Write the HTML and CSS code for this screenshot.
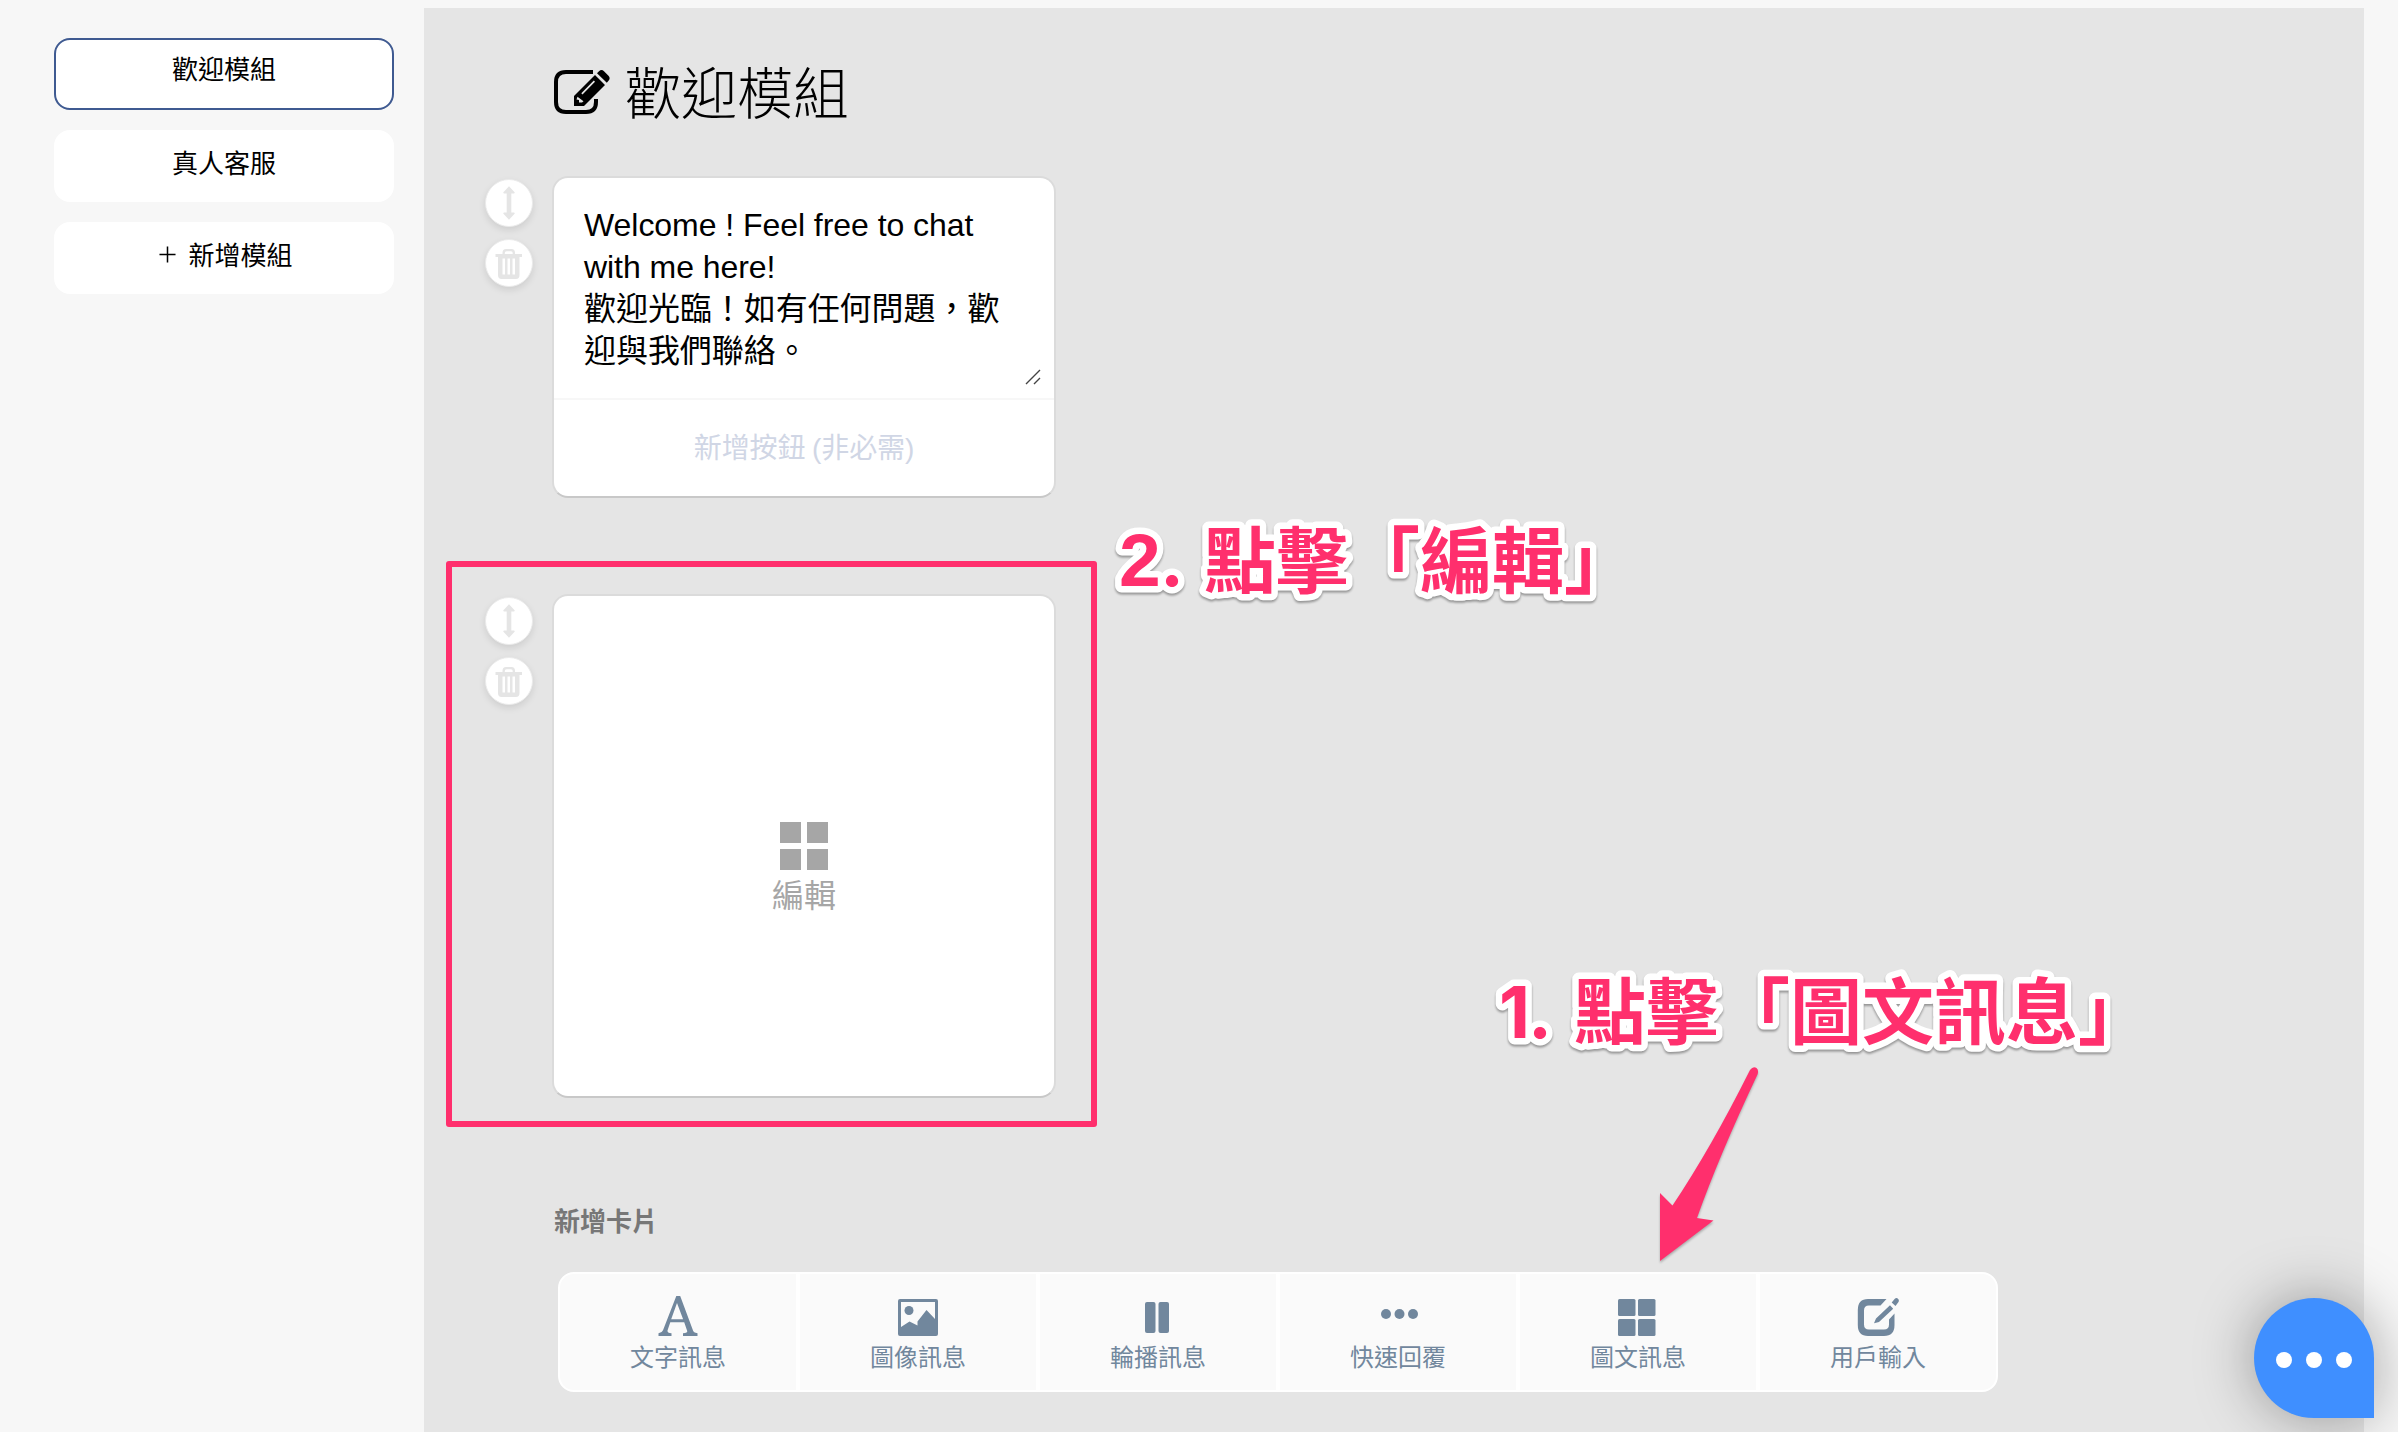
FILE: index.html
```html
<!DOCTYPE html>
<html lang="zh-Hant">
<head>
<meta charset="utf-8">
<title>歡迎模組</title>
<link rel="stylesheet" href="styles.css">
</head>
<body>
<svg class="defs" aria-hidden="true">
  <symbol id="arrows" viewBox="0 0 14 34"><path d="M7 0.3 12.6 6.2Q13 7.4 11.8 7.4H9.3V26.6H11.8Q13 26.6 12.6 27.8L7 33.7 1.4 27.8Q1 26.6 2.2 26.6H4.7V7.4H2.2Q1 7.4 1.4 6.2Z"/></symbol>
  <symbol id="trash" viewBox="0 0 28 30"><path fill-rule="evenodd" d="M7.5 5V3.8Q7.5 0 11 0H16.5Q20 0 20 3.8V5H27V8H24.5V26Q24.5 30 21 30H6.500Q3 30 3 26V8H.5V5ZM9.800 5H17.700V4Q17.700 2.300 16 2.300H11.500Q9.800 2.300 9.800 4ZM7.500 9.500V25.500H10V9.500ZM12.500 9.500V25.500H15V9.500ZM17.500 9.500V25.500H20V9.500Z"/></symbol>
</svg>
<aside class="sidebar">
  <button class="module module-active">歡迎模組</button>
  <button class="module">真人客服</button>
  <button class="module module-new"><svg class="plus" viewBox="0 0 18 18"><path d="M9 0.500V17.500M0.500 9H17.500"/></svg>新增模組</button>
</aside>
<main class="editor">
  <h1 class="title">
    <svg class="title-icon" viewBox="0 0 56 44"><path d="M39 2H12Q2 2 2 12V32Q2 42 12 42H32Q42 42 42 32V29" fill="none" stroke="#000" stroke-width="4"/><path fill-rule="evenodd" d="M20 36V26L41 5 51 15 30 36ZM23.500 26.800 22.500 29.500 25 30V32.500H28L29.500 31.300ZM27.300 23.200 28.500 24.400 41 11.800 39.800 10.600ZM43 3.200 45 1.200Q47.500-1 50 1.200L54.500 5.700Q56.800 8.200 54.500 10.700L52.800 12.800Z"/></svg>
    <span>歡迎模組</span>
  </h1>
  <section class="row">
    <div class="tools">
      <button class="tool"><svg class="i-arrows"><use href="#arrows"/></svg></button>
      <button class="tool"><svg class="i-trash"><use href="#trash"/></svg></button>
    </div>
    <div class="card">
      <div class="message">Welcome ! Feel free to chat<br>with me here!<br>歡迎光臨！如有任何問題，歡<br>迎與我們聯絡。
        <svg class="grip" viewBox="0 0 16 16"><path d="M1 15 15 1M9 15 15 9"/></svg>
      </div>
      <button class="add">新增按鈕 (非必需)</button>
    </div>
  </section>
  <section class="row row-image">
    <div class="tools">
      <button class="tool"><svg class="i-arrows"><use href="#arrows"/></svg></button>
      <button class="tool"><svg class="i-trash"><use href="#trash"/></svg></button>
    </div>
    <div class="card card-square">
      <div class="tiles"><i></i><i></i><i></i><i></i></div>
      <span>編輯</span>
    </div>
  </section>
  <h2 class="subtitle">新增卡片</h2>
  <nav class="toolbar">
    <button class="type"><svg viewBox="0 0 40 40"><path fill-rule="evenodd" d="M18.300 0H22.200L35.300 35.200Q36 36.800 39.500 37.300V40H25V37.300Q29.800 37 29.200 35L26.200 26.200H12.300L9.500 34.500Q9 37 13.500 37.300V40H.5V37.300Q4 36.800 5 34.200ZM19 7 13.200 23.300H25.100Z"/></svg>文字訊息</button>
    <button class="type"><svg viewBox="0 0 40 40"><path fill-rule="evenodd" d="M2 3H38Q40 3 40 5V38Q40 40 38 40H2Q0 40 0 38V5Q0 3 2 3ZM3 6V31L11.500 25.500 19.500 29.500V25.500L28.500 14 37 23V6Z"/><circle cx="11" cy="14.500" r="4.500"/></svg>圖像訊息</button>
    <button class="type"><svg viewBox="0 0 40 40"><rect x="7" y="6" width="10.500" height="31" rx="2"/><rect x="20.500" y="6" width="10.500" height="31" rx="2"/></svg>輪播訊息</button>
    <button class="type"><svg viewBox="0 0 40 40"><circle cx="8" cy="18" r="5"/><circle cx="21.500" cy="18" r="5"/><circle cx="35" cy="18" r="5"/></svg>快速回覆</button>
    <button class="type"><svg viewBox="0 0 40 40"><rect x="0" y="3" width="17.500" height="17" rx="1.500"/><rect x="20" y="3" width="17.500" height="17" rx="1.500"/><rect x="0" y="23" width="17.500" height="17" rx="1.500"/><rect x="20" y="23" width="17.500" height="17" rx="1.500"/></svg>圖文訊息</button>
    <button class="type"><svg viewBox="0 0 42 40"><path d="M11 3H29.500L23.500 9.500H12Q7 9.500 7 14.500V28.500Q7 33.500 12 33.500H27Q32 33.500 32 28.500V23.500L37.500 17.500V29Q37.500 40 27 40H11Q.8 40 .8 29V14Q.8 3 11 3ZM33 9.300 36.200 12.800 22 26 17 27.200 19 22.500ZM34.700 6.600 37.600 3Q39.500 1 41.200 3 42.500 4.500 41.300 6.300L38.500 10Z"/></svg>用戶輸入</button>
  </nav>
</main>
<div class="highlight"></div>
<svg class="callout callout-edit" viewBox="0 0 600 140"><text y="86"><tspan class="two" x="29">2</tspan><tspan class="num" x="70">.</tspan><tspan x="114" y="87">點擊「編輯」</tspan></text></svg>
<svg class="callout callout-card" viewBox="0 0 720 140"><text y="86"><tspan class="num" dx="39 -2">1.</tspan><tspan x="114">點擊「圖文訊息」</tspan></text></svg>
<svg class="arrow" viewBox="0 0 105 200"><path d="M5 196V128L17.500 140.500Q56 83 95 5Q98 1 101.500 3 104 5 102.500 9.500Q64 91 42 153L58.500 155.500Z"/></svg>
<button class="chat"><i></i><i></i><i></i></button>
</body>
</html>
```
FILE: styles.css
```css
* { box-sizing: border-box; }
body {
  margin: 0;
  height: 1432px;
  display: flex;
  position: relative;
  overflow: hidden;
  background: #f7f7f7;
  color: #000;
  font-family: "Liberation Sans", "Noto Sans CJK TC", sans-serif;
}
button { margin: 0; padding: 0; border: 0; background: none; font: inherit; color: inherit; }
.defs { position: absolute; width: 0; height: 0; }

.sidebar { width: 424px; padding: 38px 30px 0 54px; display: flex; flex-direction: column; gap: 20px; }
.module {
  height: 72px;
  padding-bottom: 10px;
  display: flex;
  align-items: center;
  justify-content: center;
  border: 2px solid #fff;
  border-radius: 16px;
  background: #fff;
  font-size: 26px;
}
.module-active { border-color: #3f5a91; padding-bottom: 14px; }
.module-new { padding-left: 4px; }
.plus { width: 17px; height: 17px; margin: 2px 12px 0 0; stroke: #000; stroke-width: 1.6; }

.editor { width: 1940px; margin-top: 8px; padding-left: 61px; background: #e5e5e5; }
.title { margin: 0 0 0 69px; height: 168px; padding-top: 42px; display: flex; gap: 15px; font-size: 56px; line-height: 80px; font-weight: 300; font-family: "Noto Sans CJK TC", sans-serif; }
.title-icon { width: 56px; height: 44px; margin-top: 20px; overflow: visible; }

.row { display: flex; gap: 19px; }
.row-image { margin-top: 96px; }
.tools { padding-top: 3px; display: flex; flex-direction: column; gap: 12px; }
.tool {
  width: 48px;
  height: 48px;
  display: flex;
  align-items: center;
  justify-content: center;
  border: 1px solid #ebebeb;
  border-radius: 50%;
  background: #fff;
  box-shadow: 0 3px 7px rgba(0, 0, 0, .1);
  fill: #e5e5e5;
}
.i-arrows { width: 14px; height: 34px; }
.i-trash { width: 28px; height: 30px; margin-top: 2px; }
.card { width: 504px; border: 2px solid #dbdbdb; border-bottom-color: #c8c8c8; border-radius: 16px; background: #fff; }
.message { position: relative; height: 222px; padding: 26px 30px; border-bottom: 2px solid #f7f7f7; font-size: 32px; line-height: 42px; letter-spacing: -.05px; white-space: nowrap; }
.grip { position: absolute; right: 13px; bottom: 13px; width: 16px; height: 16px; stroke: #444; stroke-width: 1.4; }
.add { display: block; width: 100%; height: 96px; padding-bottom: 4px; font-size: 28px; word-spacing: -1px; letter-spacing: -.1px; color: #d0d6e5; }
.card-square { height: 504px; padding-top: 48px; display: flex; flex-direction: column; align-items: center; justify-content: center; gap: 3px; color: #a6a6a6; font-size: 32px; line-height: 46px; }
.tiles { display: grid; grid-template-columns: 21px 21px; gap: 6px; }
.tiles i { height: 21px; background: #a6a6a6; }

.subtitle { margin: 105px 0 0 69px; height: 38px; font-size: 26px; line-height: 38px; font-weight: 700; color: #777; }
.toolbar { width: 1440px; height: 120px; margin: 31px 0 0 73px; display: flex; border-radius: 16px; border: 2px solid #fff; overflow: hidden; background: #fff; gap: 4px; }
.type { flex: 1; padding-top: 22px; display: flex; flex-direction: column; align-items: center; gap: 2px; background: #fafafa; color: #71879d; fill: #71879d; font-size: 24px; line-height: 40px; }
.type svg { width: 40px; height: 40px; }
.type:last-child svg { width: 42px; }

.highlight { position: absolute; left: 446px; top: 561px; width: 651px; height: 566px; border: 6px solid #ff2f6d; border-radius: 3px; }
.callout {
  position: absolute;
  height: 140px;
  overflow: visible;
  font-family: "Noto Sans CJK TC", sans-serif;
  font-size: 72px;
  font-weight: 700;
  fill: #ff2f6d;
  stroke: #fff;
  stroke-width: 13px;
  stroke-linejoin: round;
  paint-order: stroke fill;
  filter: drop-shadow(0 2px 1px rgba(0, 0, 0, .35));
}
.num { font-family: Inter, sans-serif; }
.two { font-family: "Liberation Sans", sans-serif; font-size: 75px; }
.callout-edit { left: 1090px; top: 500px; width: 600px; }
.callout-card { left: 1460px; top: 952px; width: 720px; }
.arrow { position: absolute; left: 1655px; top: 1065px; width: 105px; height: 200px; fill: #ff2f6d; filter: drop-shadow(0 2px 1px rgba(0, 0, 0, .25)); }
.chat {
  position: absolute;
  left: 2254px;
  top: 1298px;
  width: 120px;
  height: 120px;
  padding-top: 4px;
  display: flex;
  align-items: center;
  justify-content: center;
  gap: 14px;
  border-radius: 50% 50% 0 50%;
  background: #3f8fff;
  box-shadow: 0 0 60px rgba(0, 0, 0, .35);
}
.chat i { width: 16px; height: 16px; border-radius: 50%; background: #fff; }
```
